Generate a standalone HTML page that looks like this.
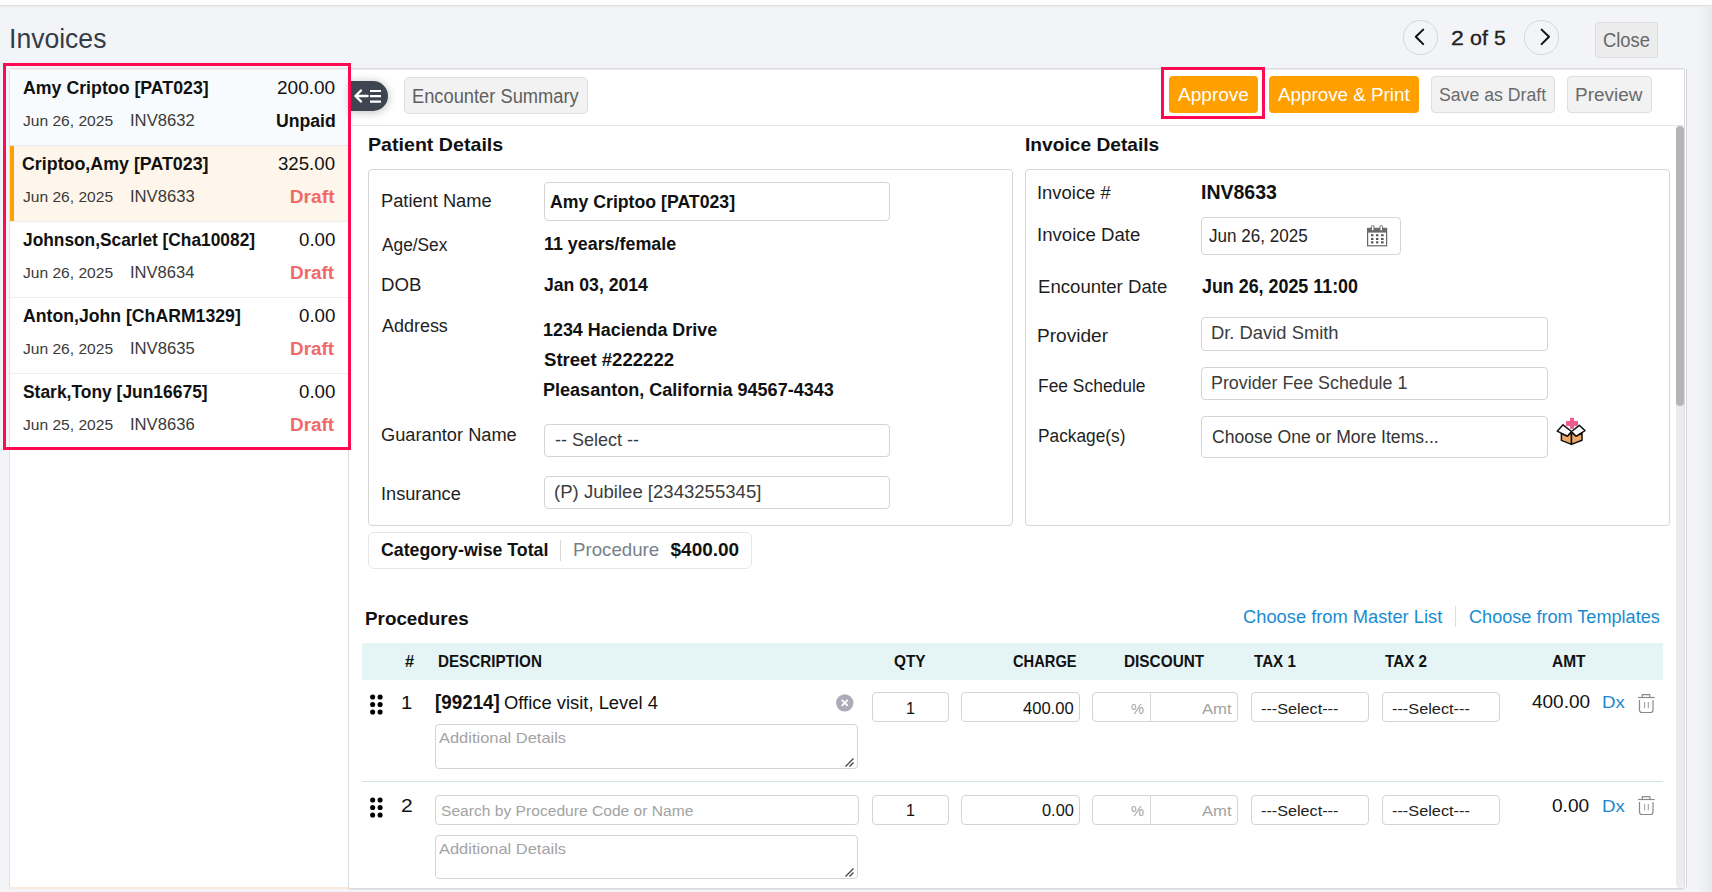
<!DOCTYPE html>
<html><head><meta charset="utf-8"><title>Invoices</title>
<style>
html,body{margin:0;padding:0;}
body{width:1712px;height:892px;position:relative;overflow:hidden;background:#f3f4f8;font-family:"Liberation Sans", sans-serif;}
.a{position:absolute;box-sizing:border-box;}
.t{position:absolute;white-space:nowrap;line-height:1;transform-origin:0 0;}
svg.a{overflow:visible;}
</style></head><body>
<div class="a" style="left:0px;top:0px;width:1712px;height:5px;background:#ffffff;"></div>
<div class="a" style="left:0px;top:5px;width:1712px;height:1px;background:#dedfe2;"></div>
<div class="a" style="left:0px;top:6px;width:1712px;height:1px;background:#ebecef;"></div>
<div class="a" style="left:1698px;top:7px;width:14px;height:885px;background:linear-gradient(90deg,rgba(225,226,230,0),rgba(225,226,230,.6))"></div>
<div class="a" style="left:1403px;top:20px;width:35px;height:35px;background:transparent;border:1px solid #d6d6d8;border-radius:17px;"></div>
<div class="a" style="left:1524px;top:20px;width:35px;height:35px;background:transparent;border:1px solid #d6d6d8;border-radius:17px;"></div>
<svg class="a" style="left:1403px;top:20px" width="34" height="34"><path d="M20.2 9.6 L12.8 16.8 L20.2 24.1" fill="none" stroke="#111" stroke-width="2" stroke-linecap="round" stroke-linejoin="round"/></svg>
<svg class="a" style="left:1524.5px;top:20px" width="34" height="34"><path d="M16.6 9.6 L24 16.8 L16.6 24.1" fill="none" stroke="#111" stroke-width="2" stroke-linecap="round" stroke-linejoin="round"/></svg>
<div class="a" style="left:1595px;top:22px;width:63px;height:36px;background:#ececec;border:1px solid #dcdcdc;border-radius:3px;"></div>
<div class="a" style="left:9px;top:68px;width:340px;height:821px;background:#ffffff;border:1px solid #dfe2e7;border-radius:3px;"></div>
<div class="a" style="left:10px;top:69px;width:338px;height:76px;background:#f8fbfd;"></div>
<div class="a" style="left:10px;top:145px;width:338px;height:1px;background:#e9eaec;"></div>
<div class="a" style="left:10px;top:69px;width:338px;height:1px;background:#fbeee6;"></div>
<div class="a" style="left:10px;top:146px;width:338px;height:75px;background:#fef6ea;"></div>
<div class="a" style="left:10px;top:146px;width:4px;height:75px;background:#ffa000;"></div>
<div class="a" style="left:10px;top:221px;width:338px;height:1px;background:#eceef0;"></div>
<div class="a" style="left:10px;top:297px;width:338px;height:1px;background:#eceef0;"></div>
<div class="a" style="left:10px;top:373px;width:338px;height:1px;background:#eceef0;"></div>
<div class="a" style="left:10px;top:887px;width:338px;height:2px;background:#fde8dc;"></div>
<div class="a" style="left:348px;top:68px;width:1337px;height:821px;background:#ffffff;border:1px solid #d9dce0;border-radius:2px;box-shadow:0 1px 1px rgba(0,0,0,.07)"></div>
<div class="a" style="left:1685px;top:69px;width:1px;height:819px;background:#ffffff;"></div>
<div class="a" style="left:349px;top:69px;width:1335px;height:1px;background:#ececef;"></div>
<div class="a" style="left:1686px;top:69px;width:1px;height:819px;background:#d6d6d8;border-radius:1px;"></div>
<div class="a" style="left:349px;top:125px;width:1335px;height:1px;background:#e6e6e6;"></div>
<div class="a" style="left:351px;top:81px;width:37px;height:30px;background:#3e4551;border-radius:0 15px 15px 0;box-shadow:0 1px 8px 1px rgba(0,0,0,.22)"></div>
<svg class="a" style="left:351px;top:81px" width="37" height="30"><path d="M4.5 15 H16.5 M10 9.5 L4.5 15 L10 20.5" fill="none" stroke="#fff" stroke-width="2.4" stroke-linecap="round" stroke-linejoin="round"/><path d="M19 10 H30 M19 15.1 H30 M19 20.6 H30" stroke="#fff" stroke-width="2.2"/></svg>
<div class="a" style="left:404px;top:77px;width:184px;height:37px;background:#f2f2f2;border:1px solid #dedede;border-radius:5px;"></div>
<div class="a" style="left:1161px;top:67px;width:104px;height:52px;background:transparent;border:3px solid #ff0a50;"></div>
<div class="a" style="left:1169px;top:76px;width:89px;height:37px;background:#ffa000;border-radius:4px;"></div>
<div class="a" style="left:1269px;top:76px;width:150px;height:37px;background:#ffa000;border-radius:4px;"></div>
<div class="a" style="left:1431px;top:76px;width:124px;height:37px;background:#f2f2f2;border:1px solid #dedede;border-radius:4px;"></div>
<div class="a" style="left:1567px;top:76px;width:85px;height:37px;background:#f2f2f2;border:1px solid #dedede;border-radius:4px;"></div>
<div class="a" style="left:1676px;top:126px;width:8px;height:762px;background:#ececec;border-radius:4px;"></div>
<div class="a" style="left:1676px;top:126px;width:8px;height:280px;background:#b5b5b5;border-radius:4px;"></div>
<div class="a" style="left:368px;top:169px;width:645px;height:357px;background:#fff;border:1px solid #d6d6d6;border-radius:4px;"></div>
<div class="a" style="left:544px;top:182px;width:346px;height:39px;background:#fff;border:1px solid #d4d4d4;border-radius:4px;"></div>
<div class="a" style="left:544px;top:424px;width:346px;height:33px;background:#fff;border:1px solid #d4d4d4;border-radius:4px;"></div>
<div class="a" style="left:544px;top:476px;width:346px;height:33px;background:#fff;border:1px solid #d4d4d4;border-radius:4px;"></div>
<div class="a" style="left:1025px;top:169px;width:645px;height:357px;background:#fff;border:1px solid #d6d6d6;border-radius:4px;"></div>
<div class="a" style="left:1201px;top:217px;width:200px;height:38px;background:#fff;border:1px solid #d4d4d4;border-radius:4px;"></div>
<svg class="a" style="left:1367px;top:225px" width="21" height="22" viewBox="0 0 21 22"><rect x="0.6" y="3.4" width="19" height="17.4" fill="#fff" stroke="#666" stroke-width="1.2"/><rect x="0" y="3" width="20" height="4.6" fill="#6b6b6b"/><rect x="4.4" y="0.6" width="2.6" height="5.2" rx="1" fill="#fff" stroke="#666" stroke-width="1"/><rect x="12.9" y="0.6" width="2.6" height="5.2" rx="1" fill="#fff" stroke="#666" stroke-width="1"/><g fill="#555"><rect x="4" y="9.2" width="2.4" height="2.1"/><rect x="9" y="9.2" width="2.4" height="2.1"/><rect x="14" y="9.2" width="2.6" height="2.1"/><rect x="4" y="13" width="2.4" height="2"/><rect x="9" y="13" width="2.4" height="2"/><rect x="14" y="13" width="2.6" height="2"/><rect x="4" y="16.3" width="2.4" height="2.1"/><rect x="9" y="16.3" width="2.4" height="2.1"/><rect x="14" y="16.3" width="2.6" height="2.1"/></g></svg>
<div class="a" style="left:1201px;top:317px;width:347px;height:34px;background:#fff;border:1px solid #d4d4d4;border-radius:4px;"></div>
<div class="a" style="left:1201px;top:367px;width:347px;height:33px;background:#fff;border:1px solid #d4d4d4;border-radius:4px;"></div>
<div class="a" style="left:1201px;top:416px;width:347px;height:42px;background:#fff;border:1px solid #d4d4d4;border-radius:4px;"></div>
<svg class="a" style="left:1550px;top:410px" width="45" height="40" viewBox="0 0 45 40"><g stroke="#111" stroke-width="1.5" stroke-linejoin="round"><path d="M7.2 21.2 L13 14.8 L21.5 21.5 L17.5 26.3 Z" fill="#fff"/><path d="M21.5 21.5 L29.3 15.3 L35 20.6 L26 26.3 Z" fill="#fff"/><path d="M11.4 23.6 L17.5 26.3 L21.5 22.3 L21.5 34.4 L11.4 30.4 Z" fill="#eda965"/><path d="M32 23.2 L26 26.3 L21.5 22.3 L21.5 34.4 L32 30.2 Z" fill="#eda965"/></g><rect x="20" y="7.8" width="4" height="11" fill="#f05a8c"/><rect x="16.1" y="11" width="11.9" height="4.9" fill="#f05a8c"/></svg>
<div class="a" style="left:368px;top:532px;width:384px;height:37px;background:#fff;border:1px solid #e6e6e6;border-radius:6px;"></div>
<div class="a" style="left:560px;top:540px;width:1px;height:21px;background:#d9d9d9;"></div>
<div class="a" style="left:1455px;top:606px;width:1px;height:21px;background:#dddddd;"></div>
<div class="a" style="left:362px;top:643px;width:1301px;height:37px;background:#e5f4f5;"></div>
<svg class="a" style="left:362px;top:0px" width="30" height="892"><circle cx="10.65" cy="697.00" r="2.55" fill="#000"/><circle cx="18.10" cy="697.00" r="2.55" fill="#000"/><circle cx="10.65" cy="704.50" r="2.55" fill="#000"/><circle cx="18.10" cy="704.50" r="2.55" fill="#000"/><circle cx="10.65" cy="712.00" r="2.55" fill="#000"/><circle cx="18.10" cy="712.00" r="2.55" fill="#000"/></svg>
<svg class="a" style="left:835.5px;top:694.2px" width="18" height="18"><circle cx="8.75" cy="8.85" r="8.7" fill="#adaab9"/><path d="M6.2 6.3 L11.3 11.4 M11.3 6.3 L6.2 11.4" stroke="#fff" stroke-width="1.8" stroke-linecap="round"/></svg>
<div class="a" style="left:435px;top:724px;width:423px;height:45px;background:#fff;border:1px solid #d4d4d4;border-radius:4px;"></div>
<svg class="a" style="left:844px;top:756.5px" width="11" height="11"><path d="M1.5 9.5 L9.5 1.5 M5.5 9.5 L9.5 5.5" stroke="#444" stroke-width="1.3"/></svg>
<div class="a" style="left:872px;top:692px;width:77px;height:30px;background:#fff;border:1px solid #d4d4d4;border-radius:4px;"></div>
<div class="a" style="left:961px;top:692px;width:119px;height:30px;background:#fff;border:1px solid #d4d4d4;border-radius:4px;"></div>
<div class="a" style="left:1092px;top:692px;width:146px;height:30px;background:#fff;border:1px solid #d4d4d4;border-radius:4px;"></div>
<div class="a" style="left:1150px;top:692px;width:1px;height:30px;background:#d8d8d8;"></div>
<div class="a" style="left:1251px;top:692px;width:118px;height:30px;background:#fff;border:1px solid #d4d4d4;border-radius:4px;"></div>
<div class="a" style="left:1382px;top:692px;width:118px;height:30px;background:#fff;border:1px solid #d4d4d4;border-radius:4px;"></div>
<svg class="a" style="left:1637px;top:693px" width="19" height="21" viewBox="0 0 19 21"><path d="M1.1 4.5 H17.7" stroke="#8a8a8a" stroke-width="1.2"/><path d="M5.3 4.2 V1.6 H12.8 V4.2" fill="none" stroke="#8a8a8a" stroke-width="1.2"/><path d="M2.5 7 V17 Q2.5 19.5 5 19.5 H13.5 Q16 19.5 16 17 V7" fill="none" stroke="#8a8a8a" stroke-width="1.2"/><path d="M7.6 9 V15.2 M11.3 9 V15.2" stroke="#a59fb5" stroke-width="1.1"/></svg>
<div class="a" style="left:362px;top:781px;width:1301px;height:1px;background:#cfe4e8;"></div>
<svg class="a" style="left:362px;top:0px" width="30" height="892"><circle cx="10.65" cy="800.00" r="2.55" fill="#000"/><circle cx="18.10" cy="800.00" r="2.55" fill="#000"/><circle cx="10.65" cy="807.50" r="2.55" fill="#000"/><circle cx="18.10" cy="807.50" r="2.55" fill="#000"/><circle cx="10.65" cy="815.00" r="2.55" fill="#000"/><circle cx="18.10" cy="815.00" r="2.55" fill="#000"/></svg>
<div class="a" style="left:435px;top:795px;width:424px;height:30px;background:#fff;border:1px solid #d4d4d4;border-radius:4px;"></div>
<div class="a" style="left:435px;top:835px;width:423px;height:44px;background:#fff;border:1px solid #d4d4d4;border-radius:4px;"></div>
<svg class="a" style="left:844px;top:866.5px" width="11" height="11"><path d="M1.5 9.5 L9.5 1.5 M5.5 9.5 L9.5 5.5" stroke="#444" stroke-width="1.3"/></svg>
<div class="a" style="left:872px;top:795px;width:77px;height:30px;background:#fff;border:1px solid #d4d4d4;border-radius:4px;"></div>
<div class="a" style="left:961px;top:795px;width:119px;height:30px;background:#fff;border:1px solid #d4d4d4;border-radius:4px;"></div>
<div class="a" style="left:1092px;top:795px;width:146px;height:30px;background:#fff;border:1px solid #d4d4d4;border-radius:4px;"></div>
<div class="a" style="left:1150px;top:795px;width:1px;height:30px;background:#d8d8d8;"></div>
<div class="a" style="left:1251px;top:795px;width:118px;height:30px;background:#fff;border:1px solid #d4d4d4;border-radius:4px;"></div>
<div class="a" style="left:1382px;top:795px;width:118px;height:30px;background:#fff;border:1px solid #d4d4d4;border-radius:4px;"></div>
<svg class="a" style="left:1637px;top:795px" width="19" height="21" viewBox="0 0 19 21"><path d="M1.1 4.5 H17.7" stroke="#8a8a8a" stroke-width="1.2"/><path d="M5.3 4.2 V1.6 H12.8 V4.2" fill="none" stroke="#8a8a8a" stroke-width="1.2"/><path d="M2.5 7 V17 Q2.5 19.5 5 19.5 H13.5 Q16 19.5 16 17 V7" fill="none" stroke="#8a8a8a" stroke-width="1.2"/><path d="M7.6 9 V15.2 M11.3 9 V15.2" stroke="#a59fb5" stroke-width="1.1"/></svg>
<div class="a" style="left:3px;top:63px;width:348px;height:387px;background:transparent;border:3px solid #ff0a50;"></div>
<span class="t" style="left:9.41px;top:25px;font-size:27.5px;color:#333c47;transform:scaleX(0.9657);">Invoices</span>
<span class="t" style="left:1451.05px;top:29px;font-size:19.5px;color:#222;-webkit-text-stroke:0.3px #222;transform:scaleX(1.1817);">2</span>
<span class="t" style="left:1469.65px;top:29px;font-size:19.5px;color:#222;-webkit-text-stroke:0.3px #222;transform:scaleX(1.0950);">of</span>
<span class="t" style="left:1494.16px;top:29px;font-size:19.5px;color:#222;-webkit-text-stroke:0.3px #222;transform:scaleX(1.0796);">5</span>
<span class="t" style="left:1603.08px;top:31px;font-size:19.5px;color:#666;transform:scaleX(0.9422);">Close</span>
<span class="t" style="left:22.64px;top:78px;font-size:19.2px;font-weight:700;color:#111;transform:scaleX(0.9248);">Amy Criptoo [PAT023]</span>
<span class="t" style="left:277.05px;top:78px;font-size:19.2px;color:#111;transform:scaleX(0.9900);">200.00</span>
<span class="t" style="left:22.77px;top:113px;font-size:15.4px;color:#3a3a3a;transform:scaleX(1.0126);">Jun 26, 2025</span>
<span class="t" style="left:129.50px;top:113px;font-size:15.6px;color:#3a3a3a;transform:scaleX(1.0668);">INV8632</span>
<span class="t" style="left:275.64px;top:111px;font-size:19.2px;font-weight:700;color:#111;transform:scaleX(0.9194);">Unpaid</span>
<span class="t" style="left:22.29px;top:154px;font-size:19.2px;font-weight:700;color:#111;transform:scaleX(0.9291);">Criptoo,Amy [PAT023]</span>
<span class="t" style="left:278.10px;top:154px;font-size:19.2px;color:#111;transform:scaleX(0.9720);">325.00</span>
<span class="t" style="left:22.77px;top:189px;font-size:15.4px;color:#3a3a3a;transform:scaleX(1.0126);">Jun 26, 2025</span>
<span class="t" style="left:129.50px;top:189px;font-size:15.6px;color:#3a3a3a;transform:scaleX(1.0654);">INV8633</span>
<span class="t" style="left:289.75px;top:187px;font-size:19.2px;font-weight:700;color:#f06a6a;">Draft</span>
<span class="t" style="left:22.74px;top:230px;font-size:19.2px;font-weight:700;color:#111;transform:scaleX(0.9029);">Johnson,Scarlet [Cha10082]</span>
<span class="t" style="left:298.74px;top:230px;font-size:19.2px;color:#111;transform:scaleX(0.9749);">0.00</span>
<span class="t" style="left:22.77px;top:265px;font-size:15.4px;color:#3a3a3a;transform:scaleX(1.0126);">Jun 26, 2025</span>
<span class="t" style="left:129.51px;top:265px;font-size:15.6px;color:#3a3a3a;transform:scaleX(1.0612);">INV8634</span>
<span class="t" style="left:290.27px;top:263px;font-size:19.2px;font-weight:700;color:#f06a6a;transform:scaleX(0.9861);">Draft</span>
<span class="t" style="left:22.65px;top:306px;font-size:19.2px;font-weight:700;color:#111;transform:scaleX(0.9202);">Anton,John [ChARM1329]</span>
<span class="t" style="left:298.74px;top:306px;font-size:19.2px;color:#111;transform:scaleX(0.9749);">0.00</span>
<span class="t" style="left:22.77px;top:341px;font-size:15.4px;color:#3a3a3a;transform:scaleX(1.0126);">Jun 26, 2025</span>
<span class="t" style="left:129.50px;top:341px;font-size:15.6px;color:#3a3a3a;transform:scaleX(1.0654);">INV8635</span>
<span class="t" style="left:290.27px;top:339px;font-size:19.2px;font-weight:700;color:#f06a6a;transform:scaleX(0.9861);">Draft</span>
<span class="t" style="left:22.56px;top:382px;font-size:19.2px;font-weight:700;color:#111;transform:scaleX(0.9081);">Stark,Tony [Jun16675]</span>
<span class="t" style="left:298.74px;top:382px;font-size:19.2px;color:#111;transform:scaleX(0.9749);">0.00</span>
<span class="t" style="left:22.77px;top:417px;font-size:15.4px;color:#3a3a3a;transform:scaleX(1.0126);">Jun 25, 2025</span>
<span class="t" style="left:129.50px;top:417px;font-size:15.6px;color:#3a3a3a;transform:scaleX(1.0654);">INV8636</span>
<span class="t" style="left:290.27px;top:415px;font-size:19.2px;font-weight:700;color:#f06a6a;transform:scaleX(0.9861);">Draft</span>
<span class="t" style="left:412.34px;top:87px;font-size:19.5px;color:#5f5f5f;transform:scaleX(0.9377);">Encounter Summary</span>
<span class="t" style="left:1177.60px;top:85px;font-size:19.2px;color:#ffffff;transform:scaleX(0.9926);">Approve</span>
<span class="t" style="left:1278.00px;top:85px;font-size:19.2px;color:#ffffff;transform:scaleX(0.9798);">Approve & Print</span>
<span class="t" style="left:1438.80px;top:85px;font-size:19.2px;color:#6a6a6a;transform:scaleX(0.9212);">Save as Draft</span>
<span class="t" style="left:1575.48px;top:85px;font-size:19.2px;color:#6a6a6a;transform:scaleX(0.9879);">Preview</span>
<span class="t" style="left:367.52px;top:135px;font-size:19px;font-weight:700;color:#111;transform:scaleX(1.0325);">Patient Details</span>
<span class="t" style="left:381.14px;top:192px;font-size:18px;color:#1e1e1e;transform:scaleX(1.0143);">Patient Name</span>
<span class="t" style="left:381.80px;top:236px;font-size:18px;color:#1e1e1e;transform:scaleX(0.9607);">Age/Sex</span>
<span class="t" style="left:381.11px;top:276px;font-size:18px;color:#1e1e1e;transform:scaleX(1.0347);">DOB</span>
<span class="t" style="left:381.80px;top:317px;font-size:18px;color:#1e1e1e;transform:scaleX(0.9969);">Address</span>
<span class="t" style="left:381.39px;top:426px;font-size:18px;color:#1e1e1e;transform:scaleX(1.0127);">Guarantor Name</span>
<span class="t" style="left:380.96px;top:485px;font-size:18px;color:#1e1e1e;transform:scaleX(1.0093);">Insurance</span>
<span class="t" style="left:549.65px;top:192px;font-size:19px;font-weight:700;color:#111;transform:scaleX(0.9307);">Amy Criptoo [PAT023]</span>
<span class="t" style="left:544.43px;top:235px;font-size:18.75px;font-weight:700;color:#111;transform:scaleX(0.9529);">11 years/female</span>
<span class="t" style="left:543.74px;top:275px;font-size:19px;font-weight:700;color:#111;transform:scaleX(0.9277);">Jan 03, 2014</span>
<span class="t" style="left:543.43px;top:321px;font-size:18.75px;font-weight:700;color:#111;transform:scaleX(0.9547);">1234 Hacienda Drive</span>
<span class="t" style="left:543.54px;top:350px;font-size:19.2px;font-weight:700;color:#111;transform:scaleX(0.9675);">Street #222222</span>
<span class="t" style="left:542.83px;top:381px;font-size:18.75px;font-weight:700;color:#111;transform:scaleX(0.9623);">Pleasanton, California 94567-4343</span>
<span class="t" style="left:554.58px;top:432px;font-size:17.75px;color:#3c3c3c;transform:scaleX(1.0139);">-- Select --</span>
<span class="t" style="left:554.39px;top:483px;font-size:18px;color:#3c3c3c;transform:scaleX(1.0310);">(P) Jubilee [2343255345]</span>
<span class="t" style="left:1024.75px;top:135px;font-size:19px;font-weight:700;color:#111;transform:scaleX(1.0089);">Invoice Details</span>
<span class="t" style="left:1037.34px;top:184px;font-size:18px;color:#1e1e1e;transform:scaleX(1.0227);">Invoice #</span>
<span class="t" style="left:1037.33px;top:226px;font-size:18px;color:#1e1e1e;transform:scaleX(1.0328);">Invoice Date</span>
<span class="t" style="left:1037.51px;top:278px;font-size:18px;color:#1e1e1e;transform:scaleX(1.0334);">Encounter Date</span>
<span class="t" style="left:1037.47px;top:327px;font-size:18px;color:#1e1e1e;transform:scaleX(1.0604);">Provider</span>
<span class="t" style="left:1037.61px;top:377px;font-size:18px;color:#1e1e1e;transform:scaleX(0.9679);">Fee Schedule</span>
<span class="t" style="left:1037.62px;top:427px;font-size:18px;color:#1e1e1e;transform:scaleX(0.9610);">Package(s)</span>
<span class="t" style="left:1200.53px;top:183px;font-size:19.7px;font-weight:700;color:#111;transform:scaleX(0.9910);">INV8633</span>
<span class="t" style="left:1209.44px;top:228px;font-size:17.5px;color:#222;transform:scaleX(0.9749);">Jun 26, 2025</span>
<span class="t" style="left:1201.53px;top:277px;font-size:19.8px;font-weight:700;color:#111;transform:scaleX(0.9033);">Jun 26, 2025 11:00</span>
<span class="t" style="left:1211.33px;top:325px;font-size:17.5px;color:#3c3c3c;transform:scaleX(1.0496);">Dr. David Smith</span>
<span class="t" style="left:1211.07px;top:375px;font-size:17.5px;color:#3c3c3c;transform:scaleX(1.0194);">Provider Fee Schedule 1</span>
<span class="t" style="left:1211.82px;top:428px;font-size:18px;color:#333;transform:scaleX(0.9769);">Choose One or More Items...</span>
<span class="t" style="left:380.79px;top:540px;font-size:19px;font-weight:700;color:#111;transform:scaleX(0.9346);">Category-wise Total</span>
<span class="t" style="left:573.01px;top:540px;font-size:19px;color:#76808a;transform:scaleX(0.9829);">Procedure</span>
<span class="t" style="left:670.51px;top:540px;font-size:19px;font-weight:700;color:#111;">$400.00</span>
<span class="t" style="left:365.08px;top:609px;font-size:19px;font-weight:700;color:#111;transform:scaleX(0.9910);">Procedures</span>
<span class="t" style="left:1243.09px;top:608px;font-size:18px;color:#1a8bd0;transform:scaleX(1.0163);">Choose from Master List</span>
<span class="t" style="left:1468.79px;top:608px;font-size:18px;color:#1a8bd0;transform:scaleX(1.0056);">Choose from Templates</span>
<span class="t" style="left:404.75px;top:654px;font-size:15.9px;font-weight:700;color:#111;transform:scaleX(1.0324);">#</span>
<span class="t" style="left:437.81px;top:654px;font-size:15.9px;font-weight:700;color:#111;transform:scaleX(0.9563);">DESCRIPTION</span>
<span class="t" style="left:894.09px;top:654px;font-size:15.9px;font-weight:700;color:#111;transform:scaleX(0.9668);">QTY</span>
<span class="t" style="left:1012.81px;top:654px;font-size:15.9px;font-weight:700;color:#111;transform:scaleX(0.9235);">CHARGE</span>
<span class="t" style="left:1124.20px;top:654px;font-size:15.9px;font-weight:700;color:#111;transform:scaleX(0.9670);">DISCOUNT</span>
<span class="t" style="left:1254.15px;top:654px;font-size:15.9px;font-weight:700;color:#111;transform:scaleX(0.9537);">TAX 1</span>
<span class="t" style="left:1384.85px;top:654px;font-size:15.9px;font-weight:700;color:#111;transform:scaleX(0.9572);">TAX 2</span>
<span class="t" style="left:1551.99px;top:654px;font-size:15.9px;font-weight:700;color:#111;transform:scaleX(0.9756);">AMT</span>
<span class="t" style="left:401.48px;top:694px;font-size:18.8px;color:#111;transform:scaleX(1.0761);">1</span>
<span class="t" style="left:435.21px;top:693px;font-size:19.8px;font-weight:700;color:#111;transform:scaleX(0.9507);">[99214]</span>
<span class="t" style="left:503.87px;top:693px;font-size:19.2px;color:#111;transform:scaleX(0.9579);">Office visit, Level 4</span>
<span class="t" style="left:439.40px;top:730px;font-size:15px;color:#a3a3a3;transform:scaleX(1.0964);">Additional Details</span>
<span class="t" style="left:905.79px;top:701px;font-size:16px;color:#111;transform:scaleX(1.0057);">1</span>
<span class="t" style="left:1022.97px;top:701px;font-size:16px;color:#111;transform:scaleX(1.0346);">400.00</span>
<span class="t" style="left:1131.49px;top:701px;font-size:15.4px;color:#a3a3a3;transform:scaleX(0.9503);">%</span>
<span class="t" style="left:1202.00px;top:701px;font-size:15.4px;color:#a3a3a3;transform:scaleX(1.0829);">Amt</span>
<span class="t" style="left:1261.35px;top:701px;font-size:15.4px;color:#222;transform:scaleX(1.0513);">---Select---</span>
<span class="t" style="left:1392.15px;top:701px;font-size:15.4px;color:#222;transform:scaleX(1.0596);">---Select---</span>
<span class="t" style="left:1531.62px;top:693px;font-size:18px;color:#111;transform:scaleX(1.0547);">400.00</span>
<span class="t" style="left:1602.30px;top:694px;font-size:17.3px;color:#1a8bd0;transform:scaleX(1.0824);">Dx</span>
<span class="t" style="left:401.25px;top:797px;font-size:18.8px;color:#111;transform:scaleX(1.1216);">2</span>
<span class="t" style="left:441.00px;top:803px;font-size:15.5px;color:#a3a3a3;transform:scaleX(1.0069);">Search by Procedure Code or Name</span>
<span class="t" style="left:439.40px;top:841px;font-size:15px;color:#a3a3a3;transform:scaleX(1.0964);">Additional Details</span>
<span class="t" style="left:905.79px;top:803px;font-size:16px;color:#111;transform:scaleX(1.0057);">1</span>
<span class="t" style="left:1041.83px;top:803px;font-size:16px;color:#111;transform:scaleX(1.0233);">0.00</span>
<span class="t" style="left:1131.49px;top:803px;font-size:15.4px;color:#a3a3a3;transform:scaleX(0.9503);">%</span>
<span class="t" style="left:1202.00px;top:803px;font-size:15.4px;color:#a3a3a3;transform:scaleX(1.0829);">Amt</span>
<span class="t" style="left:1261.35px;top:803px;font-size:15.4px;color:#222;transform:scaleX(1.0513);">---Select---</span>
<span class="t" style="left:1392.15px;top:803px;font-size:15.4px;color:#222;transform:scaleX(1.0596);">---Select---</span>
<span class="t" style="left:1552.33px;top:797px;font-size:18px;color:#111;transform:scaleX(1.0607);">0.00</span>
<span class="t" style="left:1602.30px;top:798px;font-size:17.3px;color:#1a8bd0;transform:scaleX(1.0824);">Dx</span>
</body></html>
